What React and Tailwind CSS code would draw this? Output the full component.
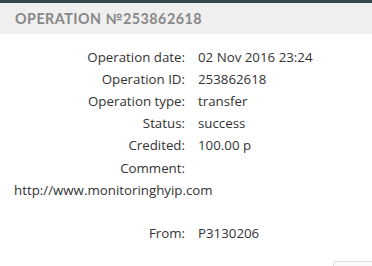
const rows = [
  ["Operation date:", "02 Nov 2016 23:24"],
  ["Operation ID:", "253862618"],
  ["Operation type:", "transfer"],
  ["Status:", "success"],
  ["Credited:", "100.00 р"],
];

const Row = ({ label, value }) => (
  <div className="flex h-[22px] items-center">
    <div className="w-[185px] text-right">{label}</div>
    <div className="pl-[13px]">{value}</div>
  </div>
);

export default function App() {
  return (
    <div
      className="w-[372px] h-[266px] bg-white overflow-hidden relative text-[13.3px] text-[#333]"
      style={{ fontFamily: "'Open Sans', sans-serif" }}
    >
      <div className="h-[3px] bg-[#37474f]" />
      <div className="h-[31px] bg-[#efefef] flex items-center px-[15px]">
        <h2
          className="text-[14.3px] font-bold tracking-[0.5px] text-[#888] uppercase"
          style={{ fontFamily: "Lato, sans-serif" }}
        >
          Operation №253862618
        </h2>
      </div>
      <div className="pt-[13px]">
        {rows.map(([label, value]) => (
          <Row key={label} label={label} value={value} />
        ))}
        <div className="pt-[1px]">
          <Row label="Comment:" value="" />
        </div>
        <div className="h-[21px] flex items-center px-[14px]">
          http://www.monitoringhyip.com
        </div>
        <div className="h-[22px]" />
        <Row label="From:" value="P3130206" />
      </div>
      <div className="absolute left-[333px] top-[261px] w-[50px] h-[20px] border border-[#ddd] rounded-[2px] bg-[#fafafa]" />
    </div>
  );
}
